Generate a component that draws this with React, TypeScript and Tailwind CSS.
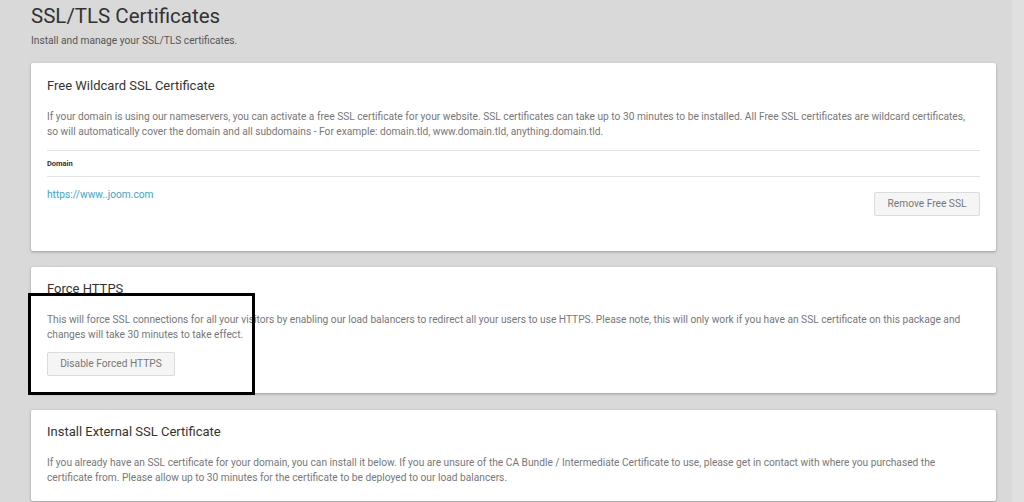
export default function App() {
  return (
    <div className="relative flex h-[502px] w-[1024px] overflow-hidden bg-[#d9d9d9] font-['Roboto',sans-serif]">
      <div className="flex-1 pl-[31px] pr-[16px]">
        <h1 className="pt-[2px] text-[20.5px] leading-[28px] text-[#333]">SSL/TLS Certificates</h1>
        <p className="mt-[3px] text-[10.2px] leading-[15px] text-[#555]">
          Install and manage your SSL/TLS certificates.
        </p>

        {/* free wildcard */}
        <div className="mt-[15px] rounded-[2px] bg-white px-[16px] pt-[13px] pb-[35px] shadow-[0_1px_3px_rgba(0,0,0,0.3)]">
          <h2 className="text-[13px] leading-[20px] text-[#333]">Free Wildcard SSL Certificate</h2>
          <p className="mt-[13px] text-[10.2px] leading-[15px] text-[#777]">
            If your domain is using our nameservers, you can activate a free SSL certificate for your website. SSL
            certificates can take up to 30 minutes to be installed. All Free SSL certificates are wildcard certificates,
            <br />
            so will automatically cover the domain and all subdomains - For example: domain.tld, www.domain.tld,
            anything.domain.tld.
          </p>
          <div className="mt-[11px] flex h-[27px] items-center border-y border-[#e3e3e3] text-[7.5px] font-bold text-[#333]">
            Domain
          </div>
          <div className="flex items-start justify-between pt-[10px]">
            <a className="text-[10.2px] leading-[15px] text-[#3aa6cc]">https://www..joom.com</a>
            <button className="mt-[5px] h-[24px] w-[106px] rounded-[2px] border border-[#dcdcdc] bg-[#f5f5f5] text-[10.2px] text-[#777]">
              Remove Free SSL
            </button>
          </div>
        </div>

        {/* force https */}
        <div className="mt-[16px] rounded-[2px] bg-white px-[16px] pt-[12px] pb-[17px] shadow-[0_1px_3px_rgba(0,0,0,0.3)]">
          <h2 className="text-[13px] leading-[20px] text-[#333]">Force HTTPS</h2>
          <p className="mt-[13px] text-[10.2px] leading-[15px] text-[#777]">
            This will force SSL connections for all your visitors by enabling our load balancers to redirect all your users
            to use HTTPS. Please note, this will only work if you have an SSL certificate on this package and
            <br />
            changes will take 30 minutes to take effect.
          </p>
          <button className="mt-[10px] h-[24px] w-[128px] rounded-[2px] border border-[#dcdcdc] bg-[#f5f5f5] text-[10.2px] text-[#777]">
            Disable Forced HTTPS
          </button>
        </div>

        {/* install external */}
        <div className="mt-[17px] rounded-[2px] bg-white px-[16px] pt-[12px] pb-[16px] shadow-[0_1px_3px_rgba(0,0,0,0.3)]">
          <h2 className="text-[13px] leading-[20px] text-[#333]">Install External SSL Certificate</h2>
          <p className="mt-[13px] text-[10.2px] leading-[15px] text-[#777]">
            If you already have an SSL certificate for your domain, you can install it below. If you are unsure of the CA
            Bundle / Intermediate Certificate to use, please get in contact with where you purchased the
            <br />
            certificate from. Please allow up to 30 minutes for the certificate to be deployed to our load balancers.
          </p>
        </div>
      </div>
      <div className="w-[12px] bg-[#e0e0e0]" />

      {/* annotation box */}
      <div className="absolute left-[28px] top-[293px] h-[102px] w-[227px] border-[3px] border-black" />
    </div>
  );
}
